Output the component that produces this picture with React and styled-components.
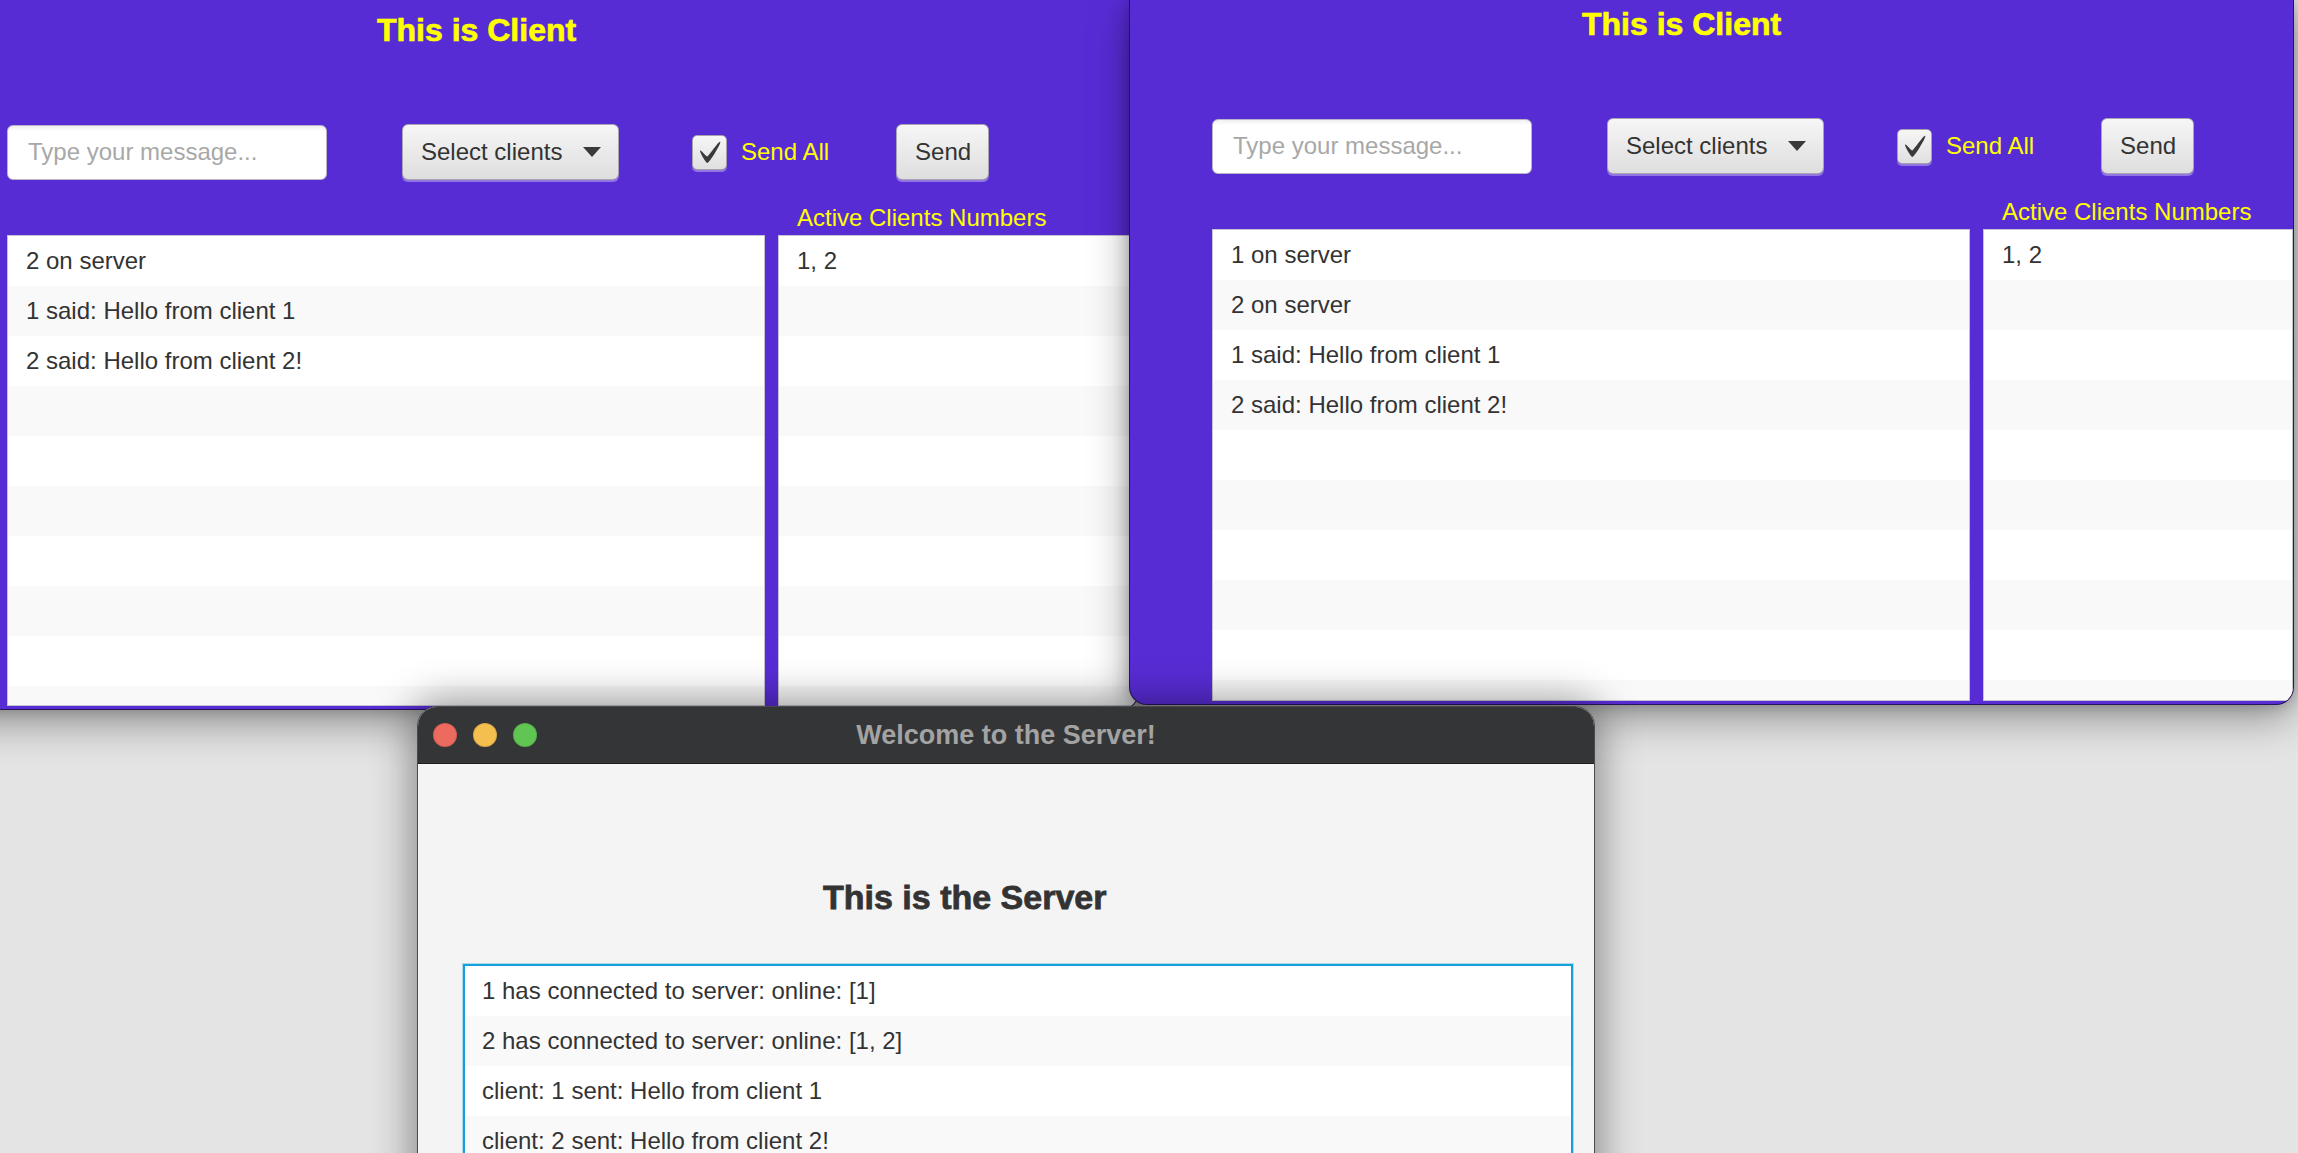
import React from "react";
import styled, { createGlobalStyle } from "styled-components";

const GlobalStyle = createGlobalStyle`
  html, body {
    margin: 0;
    padding: 0;
  }
  body {
    background: #e4e4e4;
    font-family: "Liberation Sans", Arial, sans-serif;
    overflow: hidden;
  }
`;

const Desktop = styled.div`
  position: relative;
  width: 2298px;
  height: 1153px;
  overflow: hidden;
  background: #e4e4e4;
`;

// client window (its title bar is off screen, above the top edge)
const ClientFrame = styled.div`
  position: absolute;
  left: ${(p) => p.$left}px;
  top: 0;
  width: ${(p) => p.$width}px;
  height: ${(p) => p.$height}px;
  z-index: ${(p) => p.$z};
  box-sizing: border-box;
  display: flex;
  flex-direction: column;
  padding: ${(p) => p.$padTop}px 0 3px 82px;
  background: #582cd5;
  border: 1px solid rgba(25, 12, 50, 0.75);
  border-top: none;
  border-radius: 0 0 18px 18px;
  box-shadow: 0 14px 40px rgba(0, 0, 0, 0.35), 0 0 16px rgba(0, 0, 0, 0.25);
  overflow: hidden;
`;

const ClientTitle = styled.h1`
  margin: 0 0 0 370px;
  height: 32px;
  font: bold 32px/32px "Liberation Sans", Arial, sans-serif;
  -webkit-text-stroke: 0.7px #ffff00;
  color: #ffff00;
  white-space: nowrap;
`;

const Controls = styled.div`
  display: flex;
  align-items: center;
  height: 56px;
  margin-top: 78px;
  flex: none;
`;

const TextField = styled.div`
  box-sizing: border-box;
  width: 320px;
  height: 55px;
  margin-right: 75px;
  padding-left: 20px;
  display: flex;
  align-items: center;
  background: linear-gradient(#efefef 0, #ffffff 5px);
  border: 1px solid #b9b4c8;
  border-radius: 6px;
  font-size: 24px;
  color: #a8a8a8;
`;

const Button = styled.div`
  box-sizing: border-box;
  width: ${(p) => p.$width}px;
  height: 56px;
  margin-right: ${(p) => p.$gap || 0}px;
  padding: 0 17px 0 18px;
  display: flex;
  align-items: center;
  justify-content: ${(p) => (p.$split ? "space-between" : "center")};
  background: linear-gradient(#f6f6f6, #dedede);
  border: 1px solid #a9a6b3;
  border-radius: 6px;
  box-shadow: 0 2px 0 rgba(255, 255, 255, 0.35);
  font-size: 24px;
  color: #333333;
`;

const CheckRow = styled.div`
  display: flex;
  align-items: center;
  gap: 14px;
  margin-right: 67px;
  font-size: 24px;
  color: #ffff00;
`;

const CheckBox = styled.div`
  box-sizing: border-box;
  width: 35px;
  height: 35px;
  display: flex;
  align-items: center;
  justify-content: center;
  background: linear-gradient(#f6f6f6, #e0e0e0);
  border: 1px solid #a5a2ae;
  border-radius: 5px;
  box-shadow: 0 2px 0 rgba(255, 255, 255, 0.35);
`;

const ActiveLabel = styled.div`
  margin: 26px 0 0 790px;
  height: 24px;
  line-height: 24px;
  font-size: 24px;
  color: #ffff00;
  white-space: nowrap;
`;

const Lists = styled.div`
  display: flex;
  gap: 13px;
  margin-top: 5px;
  flex: 1;
  min-height: 0;
`;

const ListBox = styled.div`
  box-sizing: border-box;
  width: ${(p) => (p.$width ? `${p.$width}px` : "auto")};
  flex: ${(p) => (p.$width ? "none" : "1")};
  background: #ffffff;
  border: 1px solid #c6c3d0;
  overflow: hidden;
`;

const Row = styled.div`
  height: 50px;
  line-height: 50px;
  padding-left: ${(p) => p.$pad}px;
  font-size: 24px;
  color: #333333;
  white-space: nowrap;
  background: #ffffff;
  &:nth-child(even) {
    background: #f9f9f9;
  }
`;

// server window
const ServerFrame = styled.div`
  position: absolute;
  left: 417px;
  top: 706px;
  width: 1178px;
  height: 620px;
  z-index: 3;
  box-sizing: border-box;
  display: flex;
  flex-direction: column;
  background: #f4f4f4;
  border: 1px solid #4a4a4c;
  border-radius: 20px 20px 0 0;
  box-shadow: 0 0 40px 4px rgba(0, 0, 0, 0.42);
  overflow: hidden;
`;

const TitleBar = styled.div`
  height: 56px;
  flex: none;
  display: grid;
  grid-template-columns: 1fr auto 1fr;
  align-items: center;
  padding-left: 15px;
  background: #343537;
  border-bottom: 1px solid #1d1d1f;
`;

const Lights = styled.div`
  display: flex;
  gap: 16px;
`;

const Light = styled.span`
  width: 24px;
  height: 24px;
  border-radius: 50%;
  background: ${(p) => p.$color};
  box-shadow: inset 0 0 0 1px rgba(0, 0, 0, 0.12);
`;

const WindowTitle = styled.div`
  font: bold 27px "Liberation Sans", Arial, sans-serif;
  color: #a3a3a3;
  white-space: nowrap;
  margin-left: -15px;
`;

const ServerBody = styled.div`
  flex: 1;
  display: flex;
  flex-direction: column;
  padding: 0 21px 0 45px;
`;

const ServerHeading = styled.h2`
  margin: 116px 0 0 360px;
  height: 34px;
  font: bold 34px/34px "Liberation Sans", Arial, sans-serif;
  -webkit-text-stroke: 0.8px #333333;
  color: #333333;
  white-space: nowrap;
`;

const ServerList = styled.div`
  margin-top: 50px;
  flex: 1;
  background: #ffffff;
  border: 2px solid #16a0da;
  box-shadow: 0 0 0 1px rgba(3, 158, 211, 0.3);
  overflow: hidden;
`;

const Mark = () => (
  <svg width="22" height="22" viewBox="-1.2 -1.6 17.8 17.8">
    <path
      fill="#3a3a3a"
      d="M-0.25,6.083c0.843-0.758,4.583,4.833,5.75,4.833S14.5-1.5,15.917-0.917c1.292,0.532-8.75,17.083-10.333,17.083S-1.083,6.833-0.25,6.083z"
    />
  </svg>
);

const Arrow = () => (
  <svg width="18" height="10" viewBox="0 0 18 10">
    <path d="M0 0H18L9 10Z" fill="#3a3a3a" />
  </svg>
);

const fill = (items, count) =>
  Array.from({ length: count }, (_, i) => items[i] || "");

function ClientWindow({ left, padTop, width, height, z, messages, active }) {
  return (
    <ClientFrame $left={left} $padTop={padTop} $width={width} $height={height} $z={z}>
      <ClientTitle>This is Client</ClientTitle>
      <Controls>
        <TextField>Type your message...</TextField>
        <Button $width={217} $gap={73} $split>
          <span>Select clients</span>
          <Arrow />
        </Button>
        <CheckRow>
          <CheckBox>
            <Mark />
          </CheckBox>
          Send All
        </CheckRow>
        <Button $width={93}>Send</Button>
      </Controls>
      <ActiveLabel>Active Clients Numbers</ActiveLabel>
      <Lists>
        <ListBox $width={758}>
          {fill(messages, 10).map((m, i) => (
            <Row key={i} $pad={18}>{m}</Row>
          ))}
        </ListBox>
        <ListBox>
          {fill([active], 10).map((m, i) => (
            <Row key={i} $pad={18}>{m}</Row>
          ))}
        </ListBox>
      </Lists>
    </ClientFrame>
  );
}

const serverLog = [
  "1 has connected to server: online: [1]",
  "2 has connected to server: online: [1, 2]",
  "client: 1 sent: Hello from client 1",
  "client: 2 sent: Hello from client 2!",
];

export default function App() {
  return (
    <Desktop>
      <GlobalStyle />
      <ClientWindow
        left={-76}
        padTop={14}
        width={1215}
        height={710}
        z={1}
        active="1, 2"
        messages={["2 on server", "1 said: Hello from client 1", "2 said: Hello from client 2!"]}
      />
      <ClientWindow
        left={1129}
        padTop={8}
        width={1165}
        height={705}
        z={2}
        active="1, 2"
        messages={["1 on server", "2 on server", "1 said: Hello from client 1", "2 said: Hello from client 2!"]}
      />
      <ServerFrame>
        <TitleBar>
          <Lights>
            <Light $color="#ed6a5e" />
            <Light $color="#f5bf4f" />
            <Light $color="#61c554" />
          </Lights>
          <WindowTitle>Welcome to the Server!</WindowTitle>
          <span />
        </TitleBar>
        <ServerBody>
          <ServerHeading>This is the Server</ServerHeading>
          <ServerList>
            {fill(serverLog, 6).map((m, i) => (
              <Row key={i} $pad={17}>{m}</Row>
            ))}
          </ServerList>
        </ServerBody>
      </ServerFrame>
    </Desktop>
  );
}
